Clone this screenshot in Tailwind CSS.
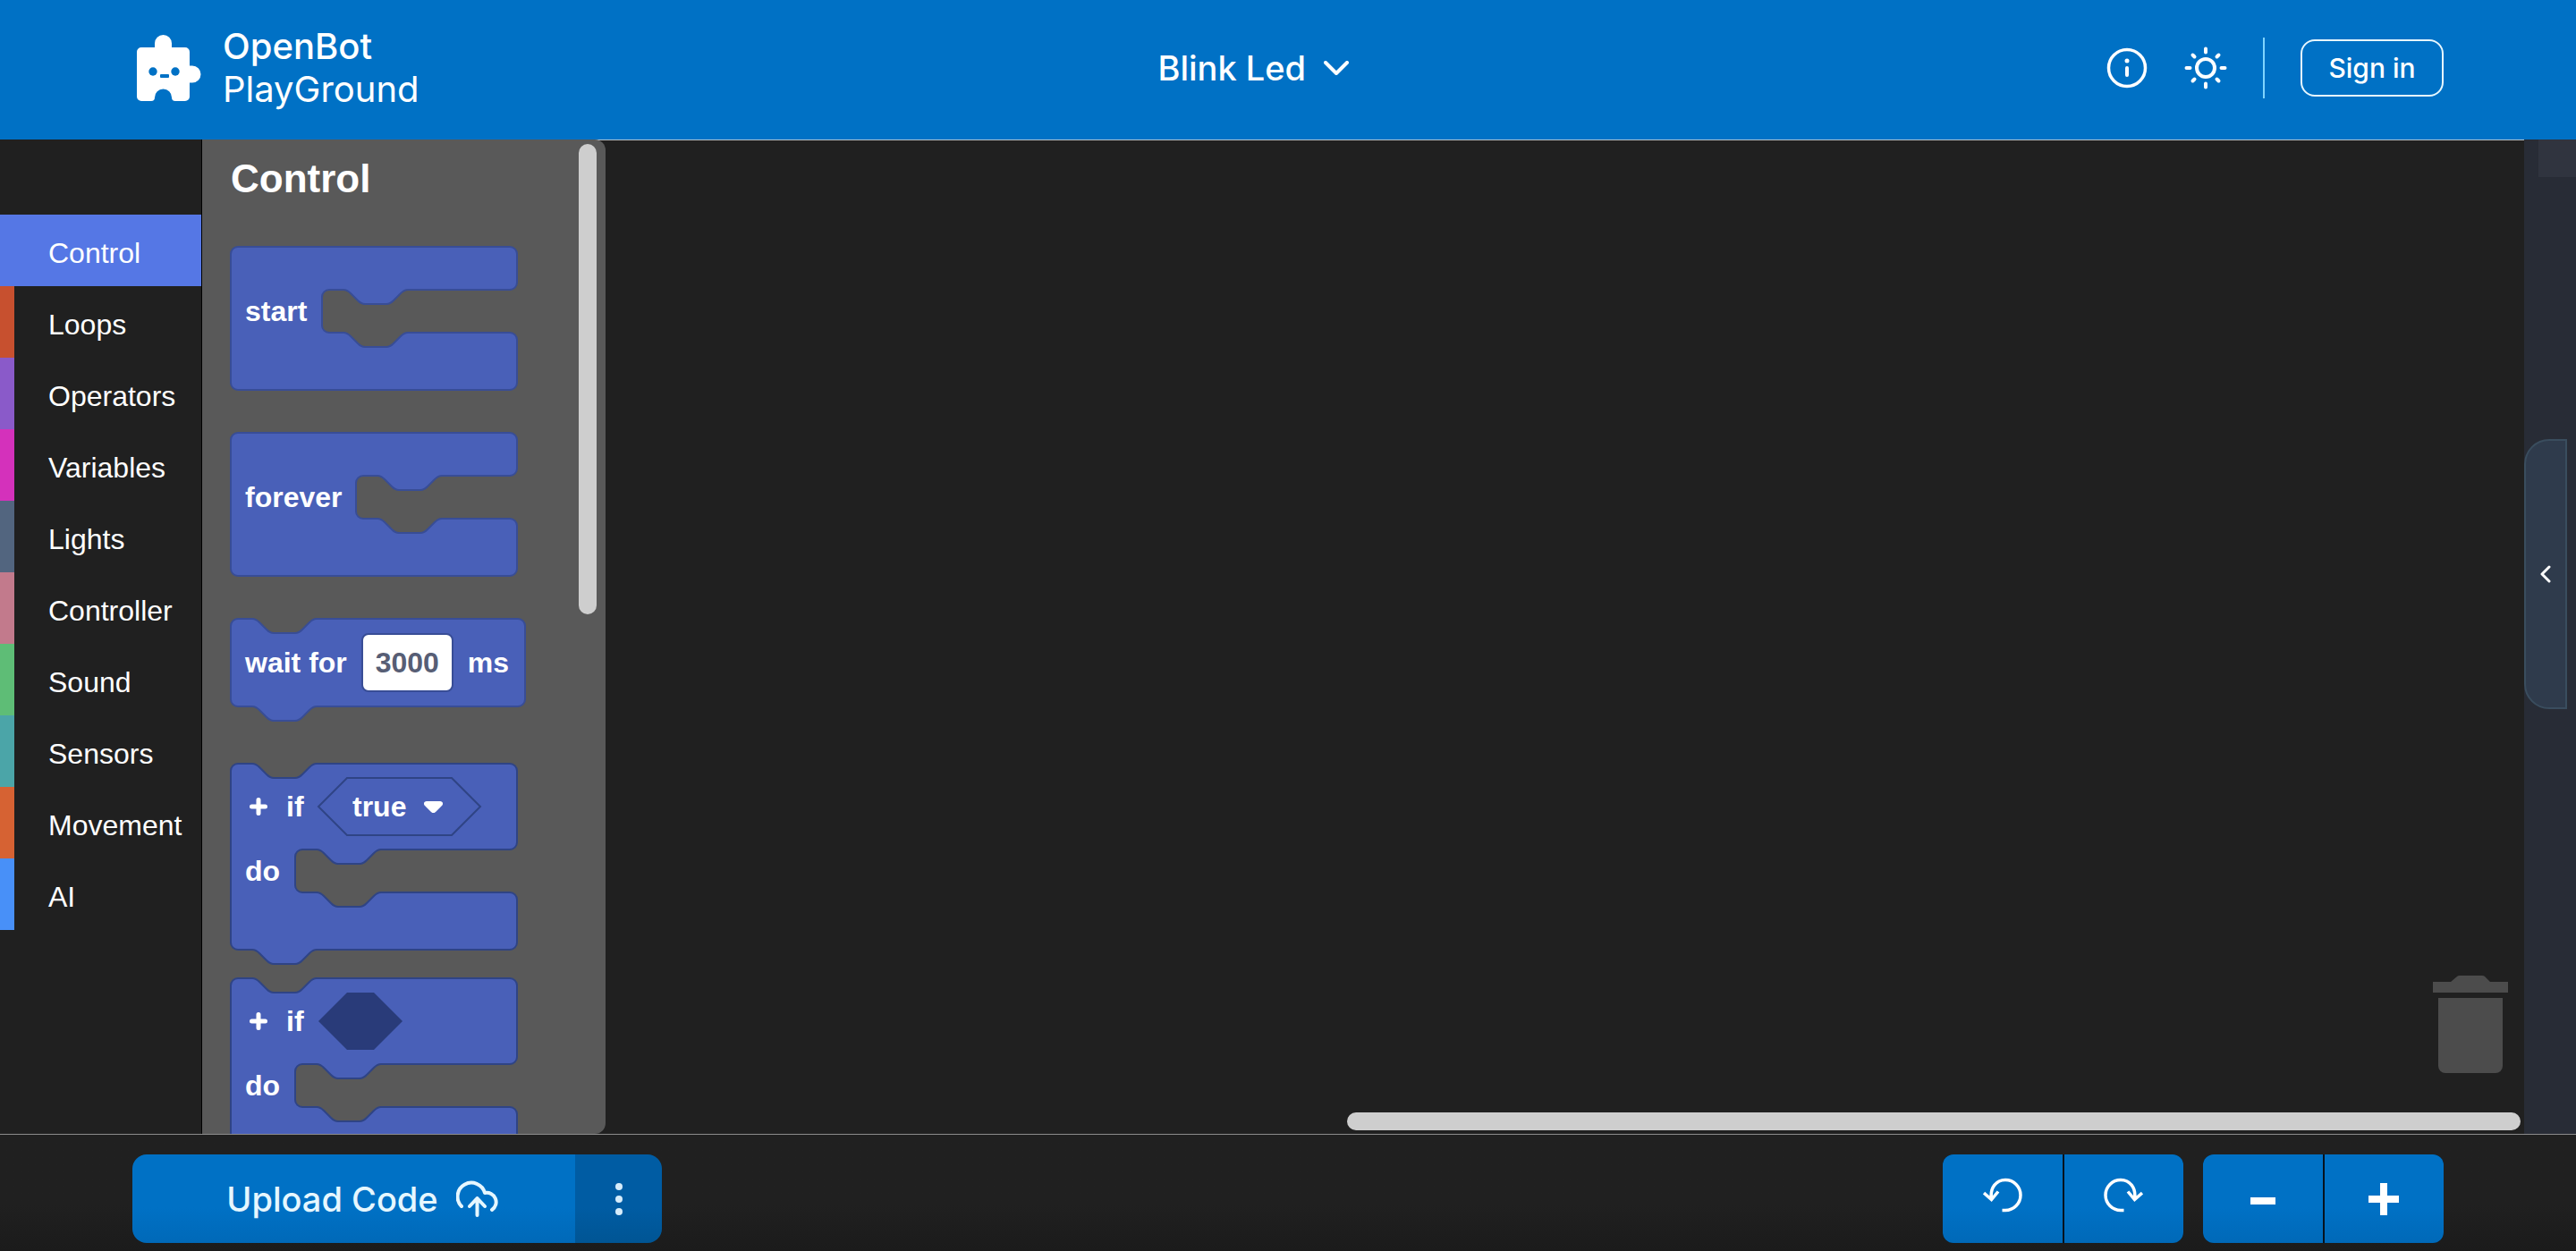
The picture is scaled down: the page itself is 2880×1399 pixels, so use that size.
<!DOCTYPE html>
<html lang="en">
<head>
<meta charset="utf-8">
<title>OpenBot PlayGround</title>
<script src="https://cdn.jsdelivr.net/npm/@tailwindcss/browser@4"></script>
</head>
<body class="flex h-screen flex-col overflow-hidden bg-[#202020] font-['Liberation_Sans',Arial,sans-serif] text-white">

<header class="flex h-[156px] shrink-0 items-center justify-between bg-[#0071c5] pr-[148px] pb-1 pl-[153px] font-[Inter,sans-serif]">
  <a href="#" class="flex items-center gap-6 text-[40px] leading-[48px]">
    <svg class="h-[74px] w-[72px]" viewBox="0 0 72 74" fill="none">
      <path fill="#fff" d="M5 14H20V9.500a9.500 9.500 0 0 1 19 0V14H54a5 5 0 0 1 5 5V34.500h3a9.500 9.500 0 0 1 0 19h-3V69a5 5 0 0 1-5 5H43a4 4 0 0 1-4-4 9.500 9.500 0 0 0-19 0 4 4 0 0 1-4 4H5a5 5 0 0 1-5-5V19a5 5 0 0 1 5-5Z"/>
      <circle cx="18" cy="41" r="4.700" fill="#0071c5"/><circle cx="43" cy="41" r="4.700" fill="#0071c5"/>
      <rect x="26" y="44" width="10" height="4" rx="1" fill="#0071c5"/>
    </svg>
    <span class="flex flex-col"><span class="font-medium">OpenBot</span><span>PlayGround</span></span>
  </a>
  <button class="mr-5 flex items-center gap-5 text-[38px] leading-[48px] font-medium">
    Blink Led
    <svg class="h-4 w-7" viewBox="0 0 28 16" fill="none" stroke="#fff" stroke-width="4" stroke-linecap="round" stroke-linejoin="round"><path d="M2 2 14 14 26 2"/></svg>
  </button>
  <div class="flex items-center">
    <button aria-label="Help">
      <svg class="size-12" viewBox="0 0 48 48" fill="none" stroke="#fff" stroke-linecap="round"><circle cx="24" cy="24" r="20.500" stroke-width="3.500"/><path stroke-width="4" d="M24 24v8"/><circle cx="24" cy="16" r="2.500" fill="#fff" stroke="none"/></svg>
    </button>
    <button aria-label="Theme" class="ml-10">
      <svg class="size-12" viewBox="0 0 48 48" fill="none" stroke="#fff" stroke-width="4" stroke-linecap="round"><circle cx="24" cy="24" r="10"/><path d="M24 2.500v4M24 41.500v4M2.500 24h4M41.500 24h4M9.500 9.500l2 2M36.500 36.500l2 2M9.500 38.500l2-2M36.500 11.500l2-2"/></svg>
    </button>
    <div class="ml-10 h-[68px] w-[2px] bg-[#7fd4ff]"></div>
    <button class="ml-10 h-16 w-[160px] rounded-2xl border-2 border-[#e6f7ff] text-[30px] leading-8 font-medium">Sign in</button>
  </div>
</header>

<main class="flex min-h-0 flex-1">
  <nav class="w-[226px] shrink-0 border-r border-black pt-[84px] text-[32px] leading-[86px]">
    <a href="#" class="block h-20 border-l-16 border-[#5577e5] bg-[#5577e5] pl-[38px]">Control</a>
    <a href="#" class="block h-20 border-l-16 border-[#c7502f] pl-[38px]">Loops</a>
    <a href="#" class="block h-20 border-l-16 border-[#8a5ac9] pl-[38px]">Operators</a>
    <a href="#" class="block h-20 border-l-16 border-[#d431bb] pl-[38px]">Variables</a>
    <a href="#" class="block h-20 border-l-16 border-[#52657f] pl-[38px]">Lights</a>
    <a href="#" class="block h-20 border-l-16 border-[#c27a8c] pl-[38px]">Controller</a>
    <a href="#" class="block h-20 border-l-16 border-[#5ebd76] pl-[38px]">Sound</a>
    <a href="#" class="block h-20 border-l-16 border-[#4ba5a8] pl-[38px]">Sensors</a>
    <a href="#" class="block h-20 border-l-16 border-[#d66233] pl-[38px]">Movement</a>
    <a href="#" class="block h-20 border-l-16 border-[#4890f8] pl-[38px]">AI</a>
  </nav>

  <section class="flex min-w-0 flex-1 border-t border-[#b8c4cc]">
    <div class="-mt-px flex w-[451px] shrink-0 justify-between overflow-hidden rounded-r-xl bg-[#595959] pr-[10px] pl-8">
      <div class="flex flex-col gap-12 text-[32px] leading-9 font-bold">
        <h2 class="-mb-12 h-[120px] shrink-0 pt-[18px] text-[44px] leading-[52px]">Control</h2>

        <div class="relative h-[160px] w-[320px] shrink-0 pt-12 pl-4">
          <svg class="absolute inset-0 size-full overflow-visible" viewBox="0 0 160 80" fill="#4960b8" stroke="#384d96"><path d="M4 0H156a4 4 0 0 1 4 4V20a4 4 0 0 1-4 4H99c-2 0-3 1-4 2l-4 4c-1 1-2 2-4 2h-12c-2 0-3-1-4-2l-4-4c-1-1-2-2-4-2H55a4 4 0 0 0-4 4V44a4 4 0 0 0 4 4H63c2 0 3 1 4 2l4 4c1 1 2 2 4 2h12c2 0 3-1 4-2l4-4c1-1 2-2 4-2H156a4 4 0 0 1 4 4V76a4 4 0 0 1-4 4H4a4 4 0 0 1-4-4V4a4 4 0 0 1 4-4Z"/></svg>
          <span class="relative flex h-12 items-center">start</span>
        </div>

        <div class="relative h-[160px] w-[320px] shrink-0 pt-12 pl-4">
          <svg class="absolute inset-0 size-full overflow-visible" viewBox="0 0 160 80" fill="#4960b8" stroke="#384d96"><path d="M4 0H156a4 4 0 0 1 4 4V20a4 4 0 0 1-4 4H118c-2 0-3 1-4 2l-4 4c-1 1-2 2-4 2h-12c-2 0-3-1-4-2l-4-4c-1-1-2-2-4-2H74a4 4 0 0 0-4 4V44a4 4 0 0 0 4 4H82c2 0 3 1 4 2l4 4c1 1 2 2 4 2h12c2 0 3-1 4-2l4-4c1-1 2-2 4-2H156a4 4 0 0 1 4 4V76a4 4 0 0 1-4 4H4a4 4 0 0 1-4-4V4a4 4 0 0 1 4-4Z"/></svg>
          <span class="relative flex h-12 items-center">forever</span>
        </div>

        <div class="relative h-[114px] w-[329px] shrink-0 pl-4">
          <svg class="absolute inset-0 size-full overflow-visible" viewBox="0 0 329 114" fill="#4960b8" stroke="#384d96" stroke-width="2"><path d="M8 0H24c4 0 6 2 8 4l8 8c2 2 4 4 8 4h24c4 0 6-2 8-4l8-8c2-2 4-4 8-4H321a8 8 0 0 1 8 8V90a8 8 0 0 1-8 8H96c-4 0-6 2-8 4l-8 8c-2 2-4 4-8 4h-24c-4 0-6-2-8-4l-8-8c-2-2-4-4-8-4H8a8 8 0 0 1-8-8V8a8 8 0 0 1 8-8Z"/></svg>
          <label class="relative flex h-[98px] items-center gap-4 whitespace-nowrap">wait for
            <input class="h-[66px] w-[103px] shrink-0 rounded-lg border-2 border-[#384d96] bg-white text-center text-[#575e75]" value="3000">
            ms</label>
        </div>

        <div class="relative h-[224px] w-[320px] shrink-0 pl-4">
          <svg class="absolute inset-0 size-full overflow-visible" viewBox="0 0 160 112" fill="#4960b8" stroke="#2f4485"><path d="M4 0H12c2 0 3 1 4 2l4 4c1 1 2 2 4 2h12c2 0 3-1 4-2l4-4c1-1 2-2 4-2H156a4 4 0 0 1 4 4V44a4 4 0 0 1-4 4H84c-2 0-3 1-4 2l-4 4c-1 1-2 2-4 2h-12c-2 0-3-1-4-2l-4-4c-1-1-2-2-4-2H40a4 4 0 0 0-4 4V68a4 4 0 0 0 4 4H48c2 0 3 1 4 2l4 4c1 1 2 2 4 2h12c2 0 3-1 4-2l4-4c1-1 2-2 4-2H156a4 4 0 0 1 4 4V100a4 4 0 0 1-4 4H48c-2 0-3 1-4 2l-4 4c-1 1-2 2-4 2h-12c-2 0-3-1-4-2l-4-4c-1-1-2-2-4-2H4a4 4 0 0 1-4-4V4a4 4 0 0 1 4-4Z"/></svg>
          <div class="relative flex h-24 items-center">
            <button aria-label="Add else" class="w-[46px] pl-[5px]"><svg class="size-5" viewBox="0 0 20 20" stroke="#fff" stroke-width="5" stroke-linecap="round"><path d="M10 2.500v15M2.500 10h15"/></svg></button>
            <label for="cond" class="w-[36px]">if</label>
            <div class="relative h-16 w-[181px]">
              <svg class="absolute inset-0 size-full overflow-visible" viewBox="0 0 181 64" fill="none" stroke="#2f4485" stroke-width="2"><path d="M32 0H149L181 32 149 64H32L0 32Z"/></svg>
              <select id="cond" class="relative h-16 w-full appearance-none bg-transparent pl-[38px] font-bold text-white"><option>true</option></select>
              <svg class="pointer-events-none absolute top-[26px] left-[118px] h-[13px] w-[21px]" viewBox="0 0 21 13" fill="#fff"><path d="M3 0H18c3 0 4 3 2 5l-7 7a3.500 3.500 0 0 1-5 0L1 5C-1 3 0 0 3 0Z"/></svg>
            </div>
          </div>
          <span class="relative flex h-12 items-center">do</span>
        </div>

        <div class="relative -mt-8 h-[224px] w-[320px] shrink-0 pl-4">
          <svg class="absolute inset-0 size-full overflow-visible" viewBox="0 0 160 112" fill="#4960b8" stroke="#2f4485"><path d="M4 0H12c2 0 3 1 4 2l4 4c1 1 2 2 4 2h12c2 0 3-1 4-2l4-4c1-1 2-2 4-2H156a4 4 0 0 1 4 4V44a4 4 0 0 1-4 4H84c-2 0-3 1-4 2l-4 4c-1 1-2 2-4 2h-12c-2 0-3-1-4-2l-4-4c-1-1-2-2-4-2H40a4 4 0 0 0-4 4V68a4 4 0 0 0 4 4H48c2 0 3 1 4 2l4 4c1 1 2 2 4 2h12c2 0 3-1 4-2l4-4c1-1 2-2 4-2H156a4 4 0 0 1 4 4V100a4 4 0 0 1-4 4H48c-2 0-3 1-4 2l-4 4c-1 1-2 2-4 2h-12c-2 0-3-1-4-2l-4-4c-1-1-2-2-4-2H4a4 4 0 0 1-4-4V4a4 4 0 0 1 4-4Z"/></svg>
          <div class="relative flex h-24 items-center">
            <button aria-label="Add else" class="w-[46px] pl-[5px]"><svg class="size-5" viewBox="0 0 20 20" stroke="#fff" stroke-width="5" stroke-linecap="round"><path d="M10 2.500v15M2.500 10h15"/></svg></button>
            <span class="w-[36px]">if</span>
            <svg class="h-16 w-[94px]" viewBox="0 0 94 64" fill="#293b79"><path d="M32 0H62L94 32 62 64H32L0 32Z"/></svg>
          </div>
          <span class="relative flex h-12 items-center">do</span>
        </div>
      </div>
      <div class="mt-[5px] h-[526px] w-5 rounded-full bg-[#cecece]"></div>
    </div>

    <div class="flex min-w-0 flex-1 flex-col items-end justify-end pr-1 pb-1">
      <svg class="mr-[14px] mb-11 h-[109px] w-[84px]" viewBox="0 0 84 109" fill="#4c4c4c"><path d="M0 7H20L27 1Q28 0 30 0H55Q57 0 58 1L64 7H84V19H0ZM6 25H78V101a8 8 0 0 1-8 8H14a8 8 0 0 1-8-8Z"/></svg>
      <div class="h-5 w-[61.3%] rounded-full bg-[#cecece]"></div>
    </div>
  </section>

  <aside class="relative flex w-[58px] shrink-0 items-center bg-[#282c36]">
    <div class="absolute top-0 right-0 h-[42px] w-[42px] bg-[#30343f]"></div>
    <button aria-label="Open code panel" class="mb-[140px] flex h-[302px] w-12 items-center justify-center rounded-l-[28px] border-2 border-[#3a4d5e] bg-[#2f3b4c]">
      <svg class="h-5 w-3" viewBox="0 0 12 20" fill="none" stroke="#fff" stroke-width="3" stroke-linecap="round" stroke-linejoin="round"><path d="M10 2 2 10l8 8"/></svg>
    </button>
  </aside>
</main>

<footer class="flex h-[131px] shrink-0 items-start border-t border-[#8c8c8c] bg-linear-to-b from-[#202020] from-60% to-[#1b1b1b] px-[148px] pt-[22px] font-[Inter,sans-serif]">
  <div class="flex h-[99px] w-[592px] overflow-hidden rounded-2xl text-[#e6f7ff]">
    <button class="flex flex-1 items-center justify-center gap-5 bg-linear-to-b from-[#0071c5] from-60% to-[#0069b8] pl-5 text-[38px] leading-[48px] font-medium">Upload Code
      <svg class="h-[41px] w-12" viewBox="0 0 48 41" fill="none" stroke="#e6f7ff" stroke-width="4" stroke-linecap="round" stroke-linejoin="round"><path d="M6 29A15.500 15.500 0 1 1 32 14A10.500 10.500 0 0 1 40 33M23.500 39V20M15 29l8.500-9 8.500 9"/></svg>
    </button>
    <button aria-label="More" class="flex w-[97px] items-center justify-center bg-linear-to-b from-[#005ca3] from-60% to-[#005594]">
      <svg class="h-10 w-2" viewBox="0 0 8 40" fill="#d6ecfa"><circle cx="4" cy="6" r="4"/><circle cx="4" cy="20" r="4"/><circle cx="4" cy="34" r="4"/></svg>
    </button>
  </div>
  <div class="ml-auto flex h-[99px] w-[269px] gap-[2px] overflow-hidden rounded-xl bg-[#06131f]">
    <button aria-label="Undo" class="flex flex-1 items-center justify-center bg-linear-to-b from-[#0071c5] from-60% to-[#0069b8]">
      <svg class="mb-2 h-10 w-11" viewBox="0 0 44 40" fill="none" stroke="#fff" stroke-width="3.500"><path d="M21.500 36.500H25A17 17 0 0 0 25 2.500C15 2.500 7.500 11 9.500 24M1 17l8.500 7.500L17 15.500"/></svg>
    </button>
    <button aria-label="Redo" class="flex flex-1 items-center justify-center bg-linear-to-b from-[#0071c5] from-60% to-[#0069b8]">
      <svg class="mb-2 h-10 w-11" viewBox="0 0 44 40" fill="none" stroke="#fff" stroke-width="3.500"><path d="M22.500 36.500H19A17 17 0 0 1 19 2.500C29 2.500 36.500 11 34.500 24M43 17l-8.500 7.500L27 15.500"/></svg>
    </button>
  </div>
  <div class="ml-[22px] flex h-[99px] w-[269px] gap-[2px] overflow-hidden rounded-xl bg-[#06131f]">
    <button aria-label="Zoom out" class="flex flex-1 items-center justify-center bg-linear-to-b from-[#0071c5] from-60% to-[#0069b8]">
      <svg class="h-9 w-[34px]" viewBox="0 0 34 36" fill="#fff"><path d="M3 16H31V24H3Z"/></svg>
    </button>
    <button aria-label="Zoom in" class="flex flex-1 items-center justify-center bg-linear-to-b from-[#0071c5] from-60% to-[#0069b8]">
      <svg class="h-9 w-[34px]" viewBox="0 0 34 36" fill="#fff"><path d="M13 0h8v14h13v8H21v14h-8V22H0v-8h13Z"/></svg>
    </button>
  </div>
</footer>
</body>
</html>
